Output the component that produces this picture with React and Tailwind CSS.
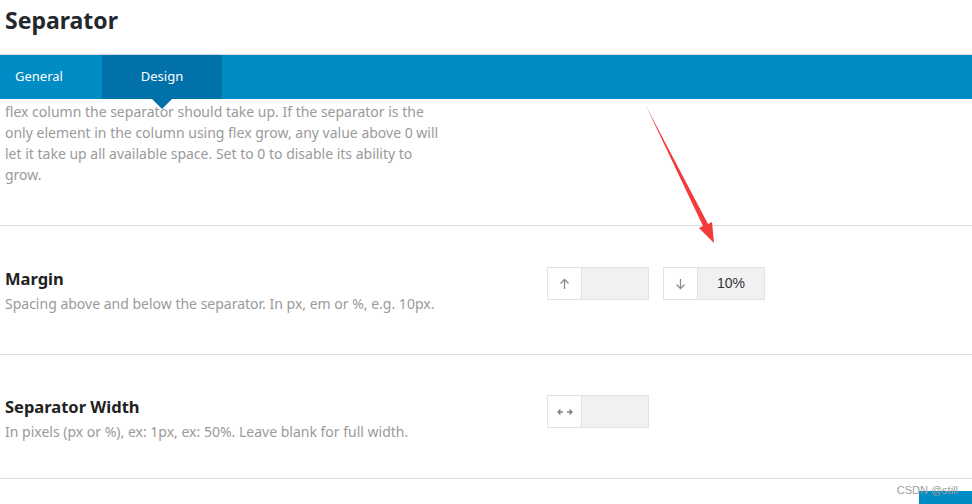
import React from "react";

const ArrowUp = () => (
  <svg width="11" height="12" viewBox="0 0 11 12" fill="none" stroke="#8a8f95" strokeWidth="1.3">
    <path d="M5.5 11V1.5M1.5 5.5l4-4 4 4" />
  </svg>
);
const ArrowDown = () => (
  <svg width="11" height="12" viewBox="0 0 11 12" fill="none" stroke="#8a8f95" strokeWidth="1.3">
    <path d="M5.5 1v9.5M1.5 6.5l4 4 4-4" />
  </svg>
);
const ArrowsH = () => (
  <svg width="16" height="8" viewBox="0 0 16 8" fill="none" stroke="#7d8389" strokeWidth="1.4">
    <path d="M1 4h5M3.5 1.5L1 4l2.5 2.5M10 4h5M12.5 1.5L15 4l-2.5 2.5" />
  </svg>
);

const Field = ({ icon, value }) => (
  <div className="flex h-[33px] w-[102px] border border-[#e2e2e2]">
    <div className="flex w-[34px] items-center justify-center border-r border-[#e2e2e2] bg-white">{icon}</div>
    <div className="flex flex-1 items-center justify-center bg-[#f2f1f1] text-[14px] text-[#333]" style={{ fontFamily: "'Liberation Sans', Arial, sans-serif" }}>
      {value}
    </div>
  </div>
);

const Row = ({ title, desc, children, h, pt }) => (
  <div className={`flex items-start border-b border-[#dcdcdc] ${h} ${pt}`}>
    <div className="w-[547px] pl-[5px] pt-px">
      <div className="text-[16.5px] font-bold leading-[22px] text-[#222]">{title}</div>
      <div className="mt-[4px] text-[14px] leading-[20px] text-[#9a9a9a]">{desc}</div>
    </div>
    <div className="flex gap-[14px]">{children}</div>
  </div>
);

export default function App() {
  return (
    <div className="relative h-[504px] w-[972px] overflow-hidden bg-white" style={{ fontFamily: "'Noto Sans', 'Open Sans', sans-serif" }}>
      <div className="flex h-[55px] items-center border-b border-[#d6d6d6] pb-[14px] pl-[5px]">
        <h1 className="text-[23px] font-bold text-[#23282d]">Separator</h1>
      </div>
      <div className="flex h-[44px] bg-[#008cc4] text-[13px] text-white">
        <div className="flex w-[102px] items-center pl-[15px]">General</div>
        <div className="relative flex w-[120px] items-center justify-center bg-[#0072a9]">
          Design
          <div className="absolute left-[50%] top-[44px] h-0 w-0 -translate-x-1/2 border-x-[10px] border-t-[10px] border-x-transparent border-t-[#0072a9]" />
        </div>
      </div>

      <div className="h-[127px] border-b border-[#dcdcdc] pl-[5px] pt-[2px]">
        <p className="w-[440px] text-[14px] leading-[21px] text-[#9a9a9a]">
          flex column the separator should take up. If the separator is the only element in the column using flex grow, any value above 0 will let it take up all available space. Set to 0 to disable its ability to grow.
        </p>
      </div>

      <Row h="h-[129px]" pt="pt-[41px]" title="Margin" desc="Spacing above and below the separator. In px, em or %, e.g. 10px.">
        <Field icon={<ArrowUp />} value="" />
        <Field icon={<ArrowDown />} value="10%" />
      </Row>

      <Row h="h-[124px]" pt="pt-[40px]" title="Separator Width" desc="In pixels (px or %), ex: 1px, ex: 50%. Leave blank for full width.">
        <Field icon={<ArrowsH />} value="" />
      </Row>

      <div className="absolute bottom-0 right-0 h-[13px] w-[53px] bg-[#008cc4]" />
      <div className="absolute right-[14px] top-[482px] text-[11px] text-[#9d9d9d]" style={{ fontFamily: "'Liberation Sans', Arial, sans-serif" }}>
        CSDN @still
      </div>

      <svg className="absolute left-0 top-0" width="972" height="504" viewBox="0 0 972 504">
        <path d="M646 106 L703 226 L699 228 L714 243 L712 222 L708 224 Z" fill="#f53a3a" />
      </svg>
    </div>
  );
}
